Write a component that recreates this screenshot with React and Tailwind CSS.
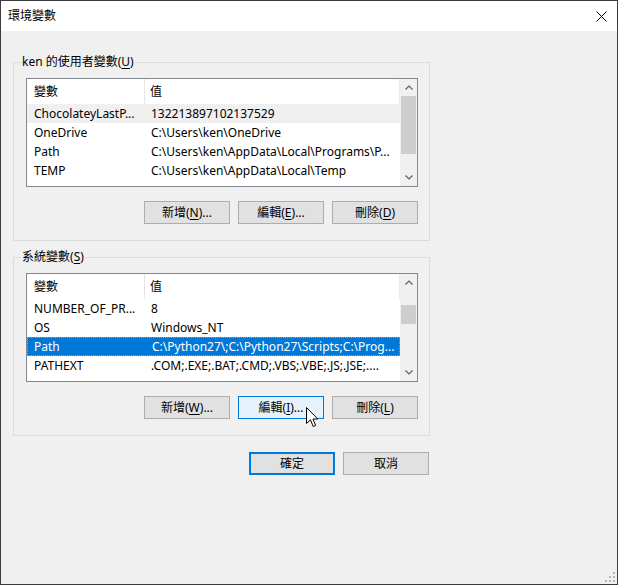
import React from 'react';

const userRows = [
  { name: 'ChocolateyLastP...', value: '132213897102137529', muted: true },
  { name: 'OneDrive', value: 'C:\\Users\\ken\\OneDrive' },
  { name: 'Path', value: 'C:\\Users\\ken\\AppData\\Local\\Programs\\P...' },
  { name: 'TEMP', value: 'C:\\Users\\ken\\AppData\\Local\\Temp' },
];

const systemRows = [
  { name: 'NUMBER_OF_PR...', value: '8' },
  { name: 'OS', value: 'Windows_NT' },
  { name: 'Path', value: 'C:\\Python27\\;C:\\Python27\\Scripts;C:\\Prog...', selected: true },
  { name: 'PATHEXT', value: '.COM;.EXE;.BAT;.CMD;.VBS;.VBE;.JS;.JSE;....' },
];

// label with an underlined access key, e.g. 新增(N)...
const Mn = ({ label, k, tail = '' }) => (
  <>
    {label}(<span className="underline underline-offset-[2px]">{k}</span>){tail}
  </>
);

const Chevron = ({ down }) => (
  <svg width="8" height="5" viewBox="0 0 8 5" fill="none" stroke="#606060" strokeWidth="1.2">
    {down ? <path d="M0.5 0.5 L4 4 L7.5 0.5" /> : <path d="M0.5 4.5 L4 1 L7.5 4.5" />}
  </svg>
);

const Button = ({ children, hover, primary }) => {
  let cls = 'bg-[#e1e1e1] border border-[#adadad]';
  if (hover) cls = 'bg-[#e5f1fb] border border-[#0078d7]';
  if (primary) cls = 'bg-[#e1e1e1] border-2 border-[#0078d7]';
  return (
    <div className={`w-[86px] h-[23px] flex items-center justify-center text-[12px] leading-none text-black ${cls}`}>
      <span>{children}</span>
    </div>
  );
};

const ListView = ({ rows, thumbOffset, thumbHeight }) => (
  <div className="w-[392px] h-[109px] border border-[#828790] bg-white flex overflow-hidden">
    <div className="flex-1 flex flex-col overflow-hidden">
      <div className="h-[25px] shrink-0 flex items-stretch">
        <div className="w-[117px] pl-[7px] flex items-center">變數</div>
        <div className="w-px bg-[#e5e5e5]" />
        <div className="flex-1 pl-[5px] flex items-center">值</div>
        <div className="w-px bg-[#ececec]" />
      </div>
      {rows.map((r) => (
        <div
          key={r.name}
          className={`h-[19px] shrink-0 flex items-center whitespace-nowrap ${
            r.selected
              ? 'bg-[#0078d7] text-white border border-dotted border-[#ff8728]'
              : r.muted
              ? 'bg-[#f0f0f0]'
              : ''
          }`}
        >
          <div className={`w-[118px] overflow-hidden ${r.selected ? 'pl-[6px]' : 'pl-[7px]'}`}>{r.name}</div>
          <div className="flex-1 pl-[6px] overflow-hidden">{r.value}</div>
        </div>
      ))}
    </div>
    <div className="w-[17px] bg-[#f0f0f0] flex flex-col">
      <div className="h-[17px] flex items-center justify-center">
        <Chevron />
      </div>
      <div className="flex-1 px-px">
        <div className="bg-[#cdcdcd]" style={{ marginTop: thumbOffset, height: thumbHeight }} />
      </div>
      <div className="h-[17px] flex items-center justify-center">
        <Chevron down />
      </div>
    </div>
  </div>
);

const Group = ({ legend, children }) => (
  <div className="relative w-[417px] h-[179px] border border-[#dcdcdc] pt-[15px] pl-[12px]">
    <span className="absolute left-[7px] top-[-8px] px-px bg-[#f0f0f0] leading-[14px]">{legend}</span>
    {children}
  </div>
);

export default function App() {
  return (
    <div className="w-[618px] h-[585px] border border-[#3c3c3c] flex flex-col text-[12px] text-black font-['Noto_Sans','Noto_Sans_CJK_TC',sans-serif]">
      {/* title bar */}
      <div className="h-[30px] shrink-0 bg-white flex items-center justify-between pl-[7px] pr-[10px]">
        <span className="text-[12px]">環境變數</span>
        <svg width="11" height="11" viewBox="0 0 11 11" stroke="#000" strokeWidth="1">
          <path d="M0.5 0.5 L10.5 10.5 M10.5 0.5 L0.5 10.5" />
        </svg>
      </div>

      <div className="relative flex-1 bg-[#f0f0f0] pl-[12px] pt-[31px]">
        <Group legend={<Mn label="ken 的使用者變數" k="U" />}>
          <ListView rows={userRows} thumbOffset={0} thumbHeight={58} />
          <div className="w-[392px] mt-[14px] flex justify-end gap-[8px]">
            <Button><Mn label="新增" k="N" tail="..." /></Button>
            <Button><Mn label="編輯" k="E" tail="..." /></Button>
            <Button><Mn label="刪除" k="D" /></Button>
          </div>
        </Group>

        <div className="mt-[16px]">
          <Group legend={<Mn label="系統變數" k="S" />}>
            <ListView rows={systemRows} thumbOffset={14} thumbHeight={19} />
            <div className="w-[392px] mt-[14px] flex justify-end gap-[8px]">
              <Button><Mn label="新增" k="W" tail="..." /></Button>
              <Button hover><Mn label="編輯" k="I" tail="..." /></Button>
              <Button><Mn label="刪除" k="L" /></Button>
            </div>
          </Group>
        </div>

        <div className="w-[416px] mt-[16px] flex justify-end gap-[8px]">
          <Button primary>確定</Button>
          <Button>取消</Button>
        </div>

        {/* mouse pointer over the hovered button */}
        <svg className="absolute left-[305px] top-[376px]" width="13" height="21" viewBox="0 0 13 21">
          <path
            d="M0.5 0.5 L0.5 16.5 L4.5 12.8 L7.2 19.5 L9.6 18.5 L7 12 L11.8 12 Z"
            fill="#fff"
            stroke="#000"
            strokeWidth="1"
            strokeLinejoin="round"
          />
        </svg>

        {/* resize grip */}
        <svg className="absolute right-px bottom-px" width="12" height="12" viewBox="0 0 12 12" fill="#b4b4b4">
          <rect x="9" y="1" width="2" height="2" />
          <rect x="5" y="5" width="2" height="2" />
          <rect x="9" y="5" width="2" height="2" />
          <rect x="1" y="9" width="2" height="2" />
          <rect x="5" y="9" width="2" height="2" />
          <rect x="9" y="9" width="2" height="2" />
        </svg>
      </div>
    </div>
  );
}
